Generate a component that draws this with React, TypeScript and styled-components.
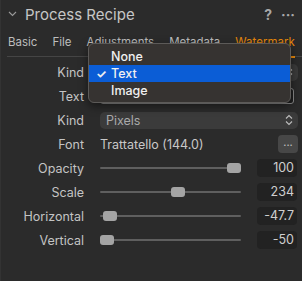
import React from 'react'
import styled, { createGlobalStyle } from 'styled-components'

const GlobalStyle = createGlobalStyle`
  html, body {
    margin: 0;
    padding: 0;
    background: #2b2b2b;
  }
  body {
    font-family: Inter, "Liberation Sans", sans-serif;
    -webkit-font-smoothing: antialiased;
  }
`

const Panel = styled.div`
  position: relative;
  width: 302px;
  height: 281px;
  box-sizing: border-box;
  background: #2b2b2b;
  border-left: 1px solid #333;
  overflow: hidden;
`

const Header = styled.div`
  display: flex;
  align-items: center;
  height: 28px;
  padding: 0 7px 0 7px;
`

const Title = styled.span`
  flex: 1 1 auto;
  margin-left: 8px;
  font-size: 15px;
  color: #c6c6c6;
`

const HeaderTools = styled.span`
  display: flex;
  align-items: center;
  gap: 9px;
  color: #a8a8a8;
  font-size: 14px;
  font-weight: 700;
`

const Tabs = styled.div`
  display: flex;
  align-items: center;
  gap: 15px;
  height: 28px;
  margin-left: 6px;
  padding-left: 1px;
  border-bottom: 1px solid #454545;
`

const Tab = styled.span<{ $active?: boolean }>`
  position: relative;
  font-size: 11.5px;
  color: ${p => (p.$active ? '#e8890c' : '#bdbdbd')};
  white-space: nowrap;
  &::after {
    content: '';
    display: ${p => (p.$active ? 'block' : 'none')};
    position: absolute;
    left: 0;
    right: 0;
    bottom: -9px;
    height: 2px;
    background: #e8890c;
  }
`

const Rows = styled.div`
  display: grid;
  grid-template-columns: 83px 1fr;
  column-gap: 16px;
  grid-auto-rows: 24px;
  padding: 3px 4px 0 0;
`

const Label = styled.span`
  align-self: center;
  text-align: right;
  font-size: 12.5px;
  color: #c4c4c4;
`

const Control = styled.div`
  display: flex;
  align-items: center;
  gap: 16px;
  min-width: 0;
`

const Select = styled.div`
  flex: 1 1 auto;
  display: flex;
  align-items: center;
  justify-content: space-between;
  height: 17px;
  padding: 0 5px 0 6px;
  border-radius: 5px;
  background: #3b3b3b;
  font-size: 12.5px;
  color: #a9a9a9;
`

const TextField = styled.div`
  flex: 1 1 auto;
  height: 14px;
  margin-right: 4px;
  border: 1px solid #8c8c8c;
  border-radius: 3px;
  background: #1f1f1f;
`

const FontName = styled.span`
  flex: 1 1 auto;
  font-size: 12.5px;
  color: #c8c8c8;
`

const DotsButton = styled.span`
  width: 20px;
  height: 18px;
  border-radius: 4px;
  background: #474747;
  color: #c0c0c0;
  font-size: 11px;
  line-height: 14px;
  text-align: center;
`

const Track = styled.div`
  position: relative;
  flex: 0 0 141px;
  height: 2px;
  background: #5f5f5f;
  border-radius: 1px;
`

const Thumb = styled.span`
  position: absolute;
  top: -4px;
  width: 14px;
  height: 10px;
  border-radius: 3px;
  background: #a4a4a4;
`

const Value = styled.span`
  width: 40px;
  height: 18px;
  box-sizing: border-box;
  padding-right: 3px;
  border-radius: 4px;
  background: #222;
  font-size: 12.5px;
  line-height: 18px;
  text-align: right;
  color: #cfcfcf;
`

const Menu = styled.div`
  position: absolute;
  left: 87px;
  top: 43px;
  width: 203px;
  height: 60px;
  box-sizing: border-box;
  padding-top: 4px;
  border: 1px solid #5c5a58;
  border-radius: 6px;
  background: #363331;
  box-shadow: 0 3px 10px rgba(0, 0, 0, 0.5);
  overflow: hidden;
`

const MenuItem = styled.div<{ $selected?: boolean }>`
  display: flex;
  align-items: center;
  height: 17px;
  padding-left: 7px;
  background: ${p => (p.$selected ? '#0b5dd6' : 'transparent')};
  color: #f0f0f0;
  font-size: 12.5px;
  font-weight: 500;
`

const Check = styled.span`
  width: 15px;
  font-size: 12px;
  font-weight: 700;
`

const Chevrons = () => (
  <svg width="8" height="12" viewBox="0 0 8 12">
    <path d="M1 4.5 L4 1.5 L7 4.5 M1 7.5 L4 10.5 L7 7.5" fill="none" stroke="#bdbdbd" strokeWidth="1.1" />
  </svg>
)

const sliders = [
  { label: 'Opacity', pos: 127, value: '100' },
  { label: 'Scale', pos: 71, value: '234' },
  { label: 'Horizontal', pos: 3, value: '-47.7' },
  { label: 'Vertical', pos: 0, value: '-50' },
]

export default function App() {
  return (
    <Panel>
      <GlobalStyle />
      <Header>
        <svg width="9" height="6" viewBox="0 0 9 6">
          <path d="M1 1 L4.5 4.5 L8 1" fill="none" stroke="#9a9a9a" strokeWidth="1.1" />
        </svg>
        <Title>Process Recipe</Title>
        <HeaderTools>
          <span>?</span>
          <span>···</span>
        </HeaderTools>
      </Header>
      <Tabs>
        <Tab>Basic</Tab>
        <Tab>File</Tab>
        <Tab>Adjustments</Tab>
        <Tab>Metadata</Tab>
        <Tab $active>Watermark</Tab>
      </Tabs>
      <Rows>
        <Label>Kind</Label>
        <Control>
          <Select>
            <span />
            <Chevrons />
          </Select>
        </Control>
        <Label>Text</Label>
        <Control>
          <TextField />
        </Control>
        <Label>Kind</Label>
        <Control>
          <Select>
            <span>Pixels</span>
            <Chevrons />
          </Select>
        </Control>
        <Label>Font</Label>
        <Control>
          <FontName>Trattatello (144.0)</FontName>
          <DotsButton>...</DotsButton>
        </Control>
        {sliders.map(s => (
          <React.Fragment key={s.label}>
            <Label>{s.label}</Label>
            <Control>
              <Track>
                <Thumb style={{ left: s.pos }} />
              </Track>
              <Value>{s.value}</Value>
            </Control>
          </React.Fragment>
        ))}
      </Rows>
      <Menu>
        <MenuItem>
          <Check />
          None
        </MenuItem>
        <MenuItem $selected>
          <Check>✓</Check>
          Text
        </MenuItem>
        <MenuItem>
          <Check />
          Image
        </MenuItem>
      </Menu>
    </Panel>
  )
}
